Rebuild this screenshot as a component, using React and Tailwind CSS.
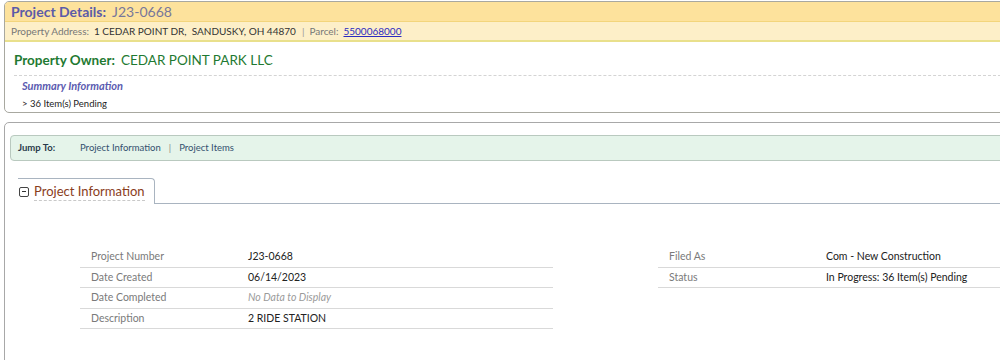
const font = { fontFamily: 'Lato, "Open Sans", sans-serif' }

function Row({ label, value, italic }) {
  return (
    <div className="flex h-[20.5px] items-center border-b border-[#d9d9d9] text-[10.5px]">
      <div className="w-[168px] pl-[11px] text-[#7a7a7a]">{label}</div>
      <div className={italic ? 'italic text-[#9a9a9a]' : 'text-[#222]'}>{value}</div>
    </div>
  )
}

export default function App() {
  return (
    <div className="w-full h-[360px] overflow-hidden bg-white" style={font}>
      {/* Top summary panel */}
      <div className="ml-1 -mr-4 mt-px border border-[#a8a8a0] rounded-[5px] overflow-hidden">
        <div className="h-[20px] bg-[#fde29c] border-b border-[#f3d57c] px-[6px] flex items-center gap-[6px]">
          <span className="text-[14px] font-bold text-[#5b5ba8]">Project Details:</span>
          <span className="text-[14px] text-[#77779a]">J23-0668</span>
        </div>
        <div className="h-[20px] bg-[#fdefc8] border-b-2 border-[#e9e08c] px-[6px] flex items-center text-[10px] text-[#333]">
          <span className="text-[#777]">Property Address:</span>
          <span className="ml-[5px]">1 CEDAR POINT DR,&nbsp; SANDUSKY, OH 44870</span>
          <span className="ml-[6px] text-[#999]">|</span>
          <span className="ml-[5px] text-[#777]">Parcel:</span>
          <a href="#" className="ml-[5px] text-[#2b2bc0] underline">5500068000</a>
        </div>
        <div className="px-[9px] pt-[8px]">
          <div className="flex items-center gap-[6px] pb-[5px] border-b border-dashed border-[#d4d4d4]">
            <span className="text-[13.5px] font-bold text-[#1f7a32]">Property Owner:</span>
            <span className="text-[13.5px] text-[#1f7a32]">CEDAR POINT PARK LLC</span>
          </div>
          <div className="pl-[8px] pt-[2px] text-[11px] font-bold italic text-[#5b5bb0] leading-[16px]">Summary Information</div>
          <div className="pl-[8px] pt-[3px] pb-[1px] text-[9.5px] text-[#222] leading-[14px]">&gt; 36 Item(s) Pending</div>
        </div>
      </div>

      {/* Project panel */}
      <div className="ml-1 -mr-4 mt-[9px] border border-[#a8a8a8] rounded-[5px] h-[260px] px-[5px] pt-[12px]">
        <div className="h-[26px] bg-[#e5f4ea] border border-[#b9c9bf] rounded-[4px] flex items-center text-[9.5px]">
          <span className="pl-[7px] w-[69px] font-bold text-[#2a3a4a]">Jump To:</span>
          <a href="#" className="text-[#33506e]">Project Information</a>
          <span className="mx-[8px] text-[#888]">|</span>
          <a href="#" className="text-[#33506e]">Project Items</a>
        </div>

        <div className="mt-[17px] flex items-end">
          <div className="ml-[8px] w-[137px] h-[26px] border-t border-r border-[#a9b4c0] rounded-tr-[4px] flex items-center pl-[1px] whitespace-nowrap">
            <span className="w-[10px] h-[10px] border border-[#444] rounded-[2px] flex items-center justify-center shrink-0">
              <span className="w-[4px] h-px bg-[#333]" />
            </span>
            <span className="ml-[5px] text-[13px] text-[#8a3d1c] border-b border-dashed border-[#c9c9c9] leading-[18px]">Project Information</span>
          </div>
          <div className="flex-1 border-b border-[#a9b4c0]" />
        </div>

        <div className="mt-[43px] flex">
          <div className="ml-[70px] w-[473px]">
            <Row label="Project Number" value="J23-0668" />
            <Row label="Date Created" value="06/14/2023" />
            <Row label="Date Completed" value="No Data to Display" italic />
            <Row label="Description" value="2 RIDE STATION" />
          </div>
          <div className="ml-[105px] flex-1">
            <Row label="Filed As" value="Com - New Construction" />
            <Row label="Status" value="In Progress: 36 Item(s) Pending" />
          </div>
        </div>
      </div>
    </div>
  )
}
